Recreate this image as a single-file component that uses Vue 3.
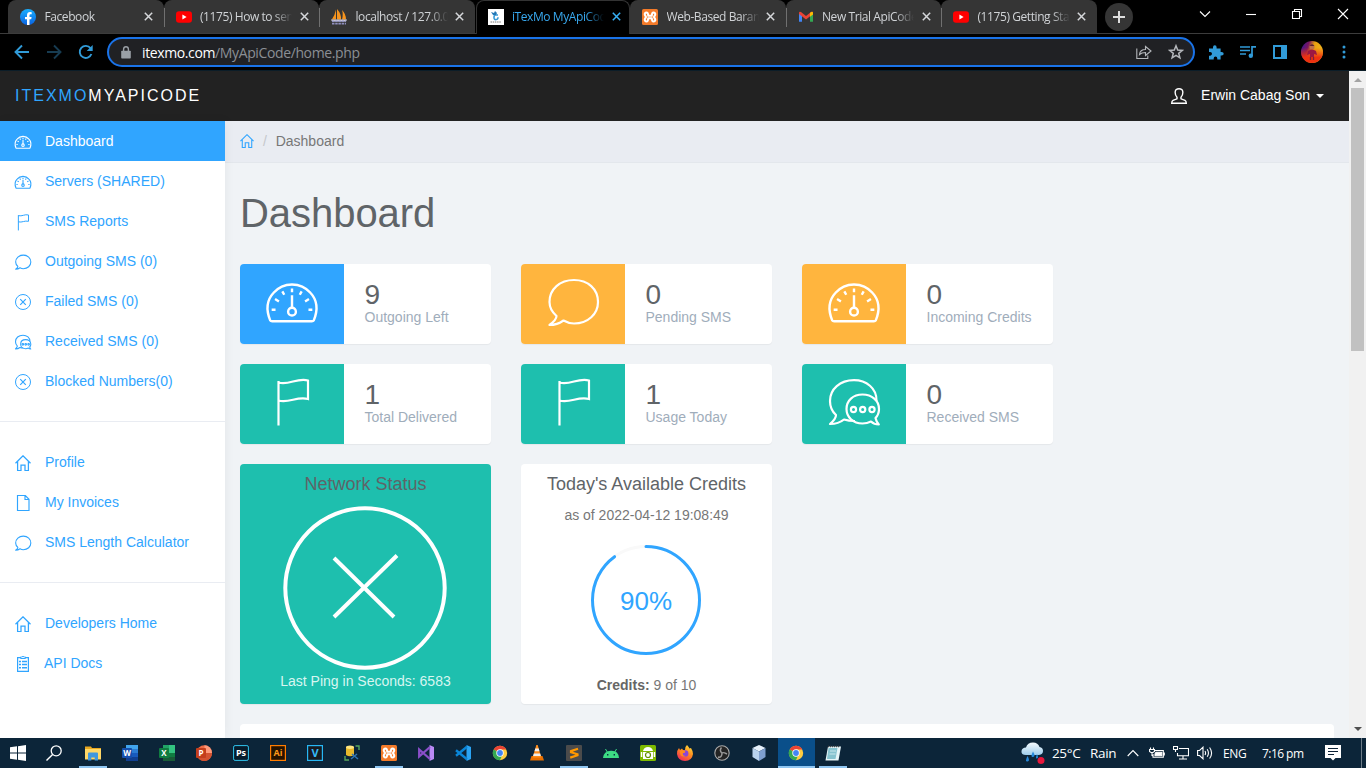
<script setup>
const tabs = [
  { icon: 'facebook', title: 'Facebook' },
  { icon: 'youtube', title: '(1175) How to send', sep: true },
  { icon: 'pma', title: 'localhost / 127.0.0.1', sep: true },
  { icon: 'itexmo', title: 'iTexMo MyApiCode', active: true },
  { icon: 'xampp', title: 'Web-Based Barangay' },
  { icon: 'gmail', title: 'New Trial ApiCode', sep: true },
  { icon: 'youtube', title: '(1175) Getting Started', sep: true },
]
const menu = [
  [
    { icon: 'dash', label: 'Dashboard', active: true },
    { icon: 'dash', label: 'Servers (SHARED)' },
    { icon: 'flag', label: 'SMS Reports' },
    { icon: 'bubble', label: 'Outgoing SMS (0)' },
    { icon: 'cancel', label: 'Failed SMS (0)' },
    { icon: 'bubbles', label: 'Received SMS (0)' },
    { icon: 'cancel', label: 'Blocked Numbers(0)' },
  ],
  [
    { icon: 'home', label: 'Profile' },
    { icon: 'file', label: 'My Invoices' },
    { icon: 'bubble', label: 'SMS Length Calculator' },
  ],
  [
    { icon: 'home', label: 'Developers Home' },
    { icon: 'clip', label: 'API Docs', tight: true },
  ],
]
const cards = [
  { icon: 'dash', color: 'blue', value: 9, label: 'Outgoing Left' },
  { icon: 'bubble', color: 'orange', value: 0, label: 'Pending SMS' },
  { icon: 'dash', color: 'orange', value: 0, label: 'Incoming Credits' },
  { icon: 'flag', color: 'teal', value: 1, label: 'Total Delivered' },
  { icon: 'flag', color: 'teal', value: 1, label: 'Usage Today' },
  { icon: 'bubbles', color: 'teal', value: 0, label: 'Received SMS' },
]
const apps = [
  { icon: 'explorer', open: true },
  { icon: 'word', glyph: 'W', kind: 'office' },
  { icon: 'excel', glyph: 'X', kind: 'office' },
  { icon: 'ppt', glyph: 'P', kind: 'office' },
  { icon: 'ps', glyph: 'Ps', kind: 'frame' },
  { icon: 'ai', glyph: 'Ai', kind: 'amber' },
  { icon: 'vegas', glyph: 'V', kind: 'cyan' },
  { icon: 'dbtool' }, { icon: 'xampp', open: true }, { icon: 'vs' }, { icon: 'vscode' }, { icon: 'chrome' },
  { icon: 'vlc' }, { icon: 'sublime', open: true }, { icon: 'android' }, { icon: 'emulator' }, { icon: 'firefox' },
  { icon: 'obs' }, { icon: 'vbox' }, { icon: 'chrome', active: true }, { icon: 'notepad', open: true },
]
</script>

<template>
  <div class="screen">
    <svg class="defs" width="0" height="0">
      <defs>
        <linearGradient id="gFb" x1="0" y1="0" x2="0" y2="1"><stop offset="0" stop-color="#19afff" /><stop offset="1" stop-color="#0a62e0" /></linearGradient>
        <linearGradient id="gCloud" x1="0" y1="0" x2="0" y2="1"><stop offset="0" stop-color="#f4fafe" /><stop offset="1" stop-color="#9fcdec" /></linearGradient>
        <linearGradient id="gFox" x1="0.8" y1="0" x2="0.2" y2="1"><stop offset="0" stop-color="#ffdf3a" /><stop offset="0.45" stop-color="#ff8a1e" /><stop offset="1" stop-color="#f0245e" /></linearGradient>
        <linearGradient id="gAv" x1="0" y1="0" x2="1" y2="0.3"><stop offset="0" stop-color="#2b1aa0" /><stop offset="0.35" stop-color="#7a1560" /><stop offset="0.6" stop-color="#e8a010" /><stop offset="1" stop-color="#f2b61c" /></linearGradient>
        <linearGradient id="gAvLow" x1="0" y1="0" x2="0" y2="1"><stop offset="0.3" stop-color="#f03a10" stop-opacity="0" /><stop offset="0.75" stop-color="#ee3010" /></linearGradient>
      </defs>

      <symbol id="dash" viewBox="0 0 64 64">
        <g class="line" fill="none" stroke="currentColor">
          <path d="M9.500 51C5 40 6 30 13 22.500C23 11 41 11 51 22.500C58 30 59 40 54.500 51Q54 51.800 52.500 51.800H11.500Q10 51.800 9.500 51Z" />
          <circle cx="32" cy="42" r="4" />
          <path d="M32 38V25M32 18v4M22 21l2 3.500M42 21l-2 3.500M14.500 29l4 2.500M49.500 29l-4 2.500M11 40h4M53 40h-4" />
        </g>
      </symbol>
      <symbol id="bubble" viewBox="0 0 64 64">
        <path class="line" fill="none" stroke="currentColor" stroke-linejoin="round" d="M33 10C19 10 8.500 19 8.500 32C8.500 37.500 11 42 15.500 46C15.500 49 12.500 52 8.500 55C14.500 55 19 53 22.500 50.500C26 52.500 30 53.500 33 53.500C47 53.500 57 44 57 32C57 19 47 10 33 10Z" />
      </symbol>
      <symbol id="bubbles" viewBox="0 0 64 64">
        <g class="line" fill="none" stroke="currentColor" stroke-linejoin="round">
          <path d="M54.500 31C55 18 44 10.200 32 10.200C18 10.200 8 19 8 31C8 36 9.500 41 14 45C14 48 11.500 51 8 54C14 54 19 52 22 49.500C25 50.500 28 51 33 51" />
          <path d="M40.500 24.500C31 24.500 24.500 30.500 24.500 39C24.500 47 31 53.500 40.500 53.500C44 53.500 46.500 52.800 49 51.500C51 53.500 53.500 54.500 56.800 54.500C55 52.500 54 50.500 53.500 48C56 45.500 57 42.500 57 39C57 30.500 50 24.500 40.500 24.500Z" />
          <circle cx="31.500" cy="39.500" r="2.600" /><circle cx="40.700" cy="39.500" r="2.600" /><circle cx="50" cy="39.500" r="2.600" />
        </g>
      </symbol>
      <symbol id="flag" viewBox="0 0 64 64">
        <path class="line" fill="none" stroke="currentColor" d="M18.500 56.500V12M18.500 13.500C29 16.500 37 8.500 48 11.500V30C37 27 29 34.500 18.500 31.500" />
      </symbol>
      <symbol id="cancel" viewBox="0 0 16 16">
        <g fill="none" stroke="currentColor"><circle cx="8" cy="8" r="7.500" /><path stroke-width="1.200" d="M5.200 5.200l5.600 5.600M10.800 5.200l-5.600 5.600" /></g>
      </symbol>
      <symbol id="home" viewBox="0 0 16 16">
        <path fill="none" stroke="currentColor" stroke-width="1.250" d="M.5 8.200L8 .8l7.500 7.400M2.600 6.500v9H6V10h4v5.500h3.400v-9" />
      </symbol>
      <symbol id="file" viewBox="0 0 16 16">
        <path fill="none" stroke="currentColor" stroke-width="1.150" d="M2.500.5h7.800l3.700 3.800v11.200H2.500zM10 .5v4h4" />
      </symbol>
      <symbol id="clip" viewBox="0 0 16 16">
        <g fill="none" stroke="currentColor"><path stroke-width="1.200" d="M5 1.600H2.600v13.800h10.800V1.600H11" /><path d="M5.500 2.500h5V1H9.300Q8-.2 6.700 1H5.500z" /><path stroke-width="1.400" d="M4 5.500h2M4 8.500h2M4 11.800h2M7 5.500h5M7 8.500h5M7 11.800h5" /></g>
      </symbol>
      <symbol id="user" viewBox="0 0 16 16">
        <path fill="none" stroke="currentColor" stroke-width="1.400" d="M6 9.300C4.600 8 4 6.300 4.200 3.700C4.400 1.800 5.800.7 8 .7s3.600 1.100 3.800 3C12 6.300 11.400 8 10 9.300v1.500l4 1.500q1.200.5 1.300 3H.7Q.8 12.800 2 12.300l4-1.500z" />
      </symbol>

      <symbol id="facebook" viewBox="0 0 16 16">
        <circle cx="8" cy="8" r="8" fill="url(#gFb)" /><path fill="#fff" d="M7 16v-5.700H5V8h2V6.300C7 4.200 8.200 3.100 10 3.100l1.700.1v2h-1c-.9 0-1.200.5-1.200 1.100V8h2.100l-.4 2.300H9.500V16z" />
      </symbol>
      <symbol id="youtube" viewBox="0 0 16 16"><rect y="2.300" width="16" height="11.500" rx="3" fill="#f00" /><path fill="#fff" d="M6.400 5.600l4.200 2.400-4.200 2.400z" /></symbol>
      <symbol id="pma" viewBox="0 0 16 16">
        <path fill="#f7941d" d="M5 .5v10H.8Q4 6 5 .5M6 0q4.500 5 4 10.500H6M11 1q4 4 4 9.500H11Q12.500 5 11 1" /><path fill="#d5d5e2" d="M0 10.500h16l-1 2H1z" /><path fill="none" stroke="#8f8fbd" stroke-width="1.600" stroke-dasharray="2.500 .7" d="M1 12.300h14M1 14.600h14" />
      </symbol>
      <symbol id="itexmo" viewBox="0 0 16 16"><path fill="#fff" d="M0 0h16v16H0z" /><path fill="none" stroke="#3b9bd5" stroke-width="1.600" d="M10 6H7.500Q6 6 6 8.500T8 10.500Q10 10.700 10 8.300" /><path fill="#2479b8" d="M3 3l3 1 1-2 2 2-1 2H5z" /><path stroke="#777" stroke-dasharray="1.500 .7" d="M2.500 13h11" /></symbol>
      <symbol id="xampp" viewBox="0 0 16 16"><rect width="16" height="16" rx="1.500" fill="#f47b2a" /><path fill="none" stroke="#fff" stroke-width="2.100" stroke-linejoin="round" d="M4.600 3.500Q2.500 3.700 2.800 5.800L4 8 2.800 10.300Q2.600 12.500 4.600 12.500 6 12.500 6.300 9.200H9.700Q10 12.500 11.400 12.500 13.500 12.500 13.200 10.300L12 8l1.200-2.200Q13.500 3.600 11.400 3.500 10 3.500 9.700 6.800H6.300Q6 3.500 4.600 3.500Z" /></symbol>
      <symbol id="gmail" viewBox="0 0 16 16"><path fill="#4285f4" d="M1 4v8.800h3V6z" /><path fill="#34a853" d="M12 6v6.800h3V4z" /><path fill="#ea4335" d="M1 5V4Q1 2 3 3l5 4 5-4q2-1 2 1v1l-7 5.500z" /><path fill="#fbbc04" d="M12 4l1-1q2-.8 2 1v1.500l-3 2.200z" /></symbol>

      <symbol id="explorer" viewBox="0 0 16 16"><path fill="#e9a820" d="M0 1.500h6l1 1.500h9v4H0z" /><path fill="#ffd766" d="M0 4h16v10.500H0z" /><path fill="#3f97de" d="M3 8.500q0-1 1-1h8q1 0 1 1v7h-3.300v-3H6.300v3H3z" /></symbol>
      <symbol id="word" viewBox="0 0 16 16"><path fill="#41a5ee" d="M4 0h12v4.500H4z" /><path fill="#2b7cd3" d="M4 4h12v4H4z" /><path fill="#185abd" d="M4 8h12v4H4z" /><path fill="#103f91" d="M4 12h12v4H4z" /><rect y="3" width="10" height="10" rx="1" fill="#1650ad" /></symbol>
      <symbol id="excel" viewBox="0 0 16 16"><path fill="#21a366" d="M4 0h6v8H4z" /><path fill="#33c481" d="M10 0h6v8h-6z" /><path fill="#185c37" d="M4 8h12v8H4z" /><path fill="#107c41" d="M10 8h6v4h-6z" /><rect y="3" width="10" height="10" rx="1" fill="#107c41" /></symbol>
      <symbol id="ppt" viewBox="0 0 16 16"><circle cx="8.300" cy="8" r="7.700" fill="#ed6c47" /><path fill="#ff9a7a" d="M8.500.3A7.700 7.700 0 0 1 16 8H8.500z" /><path fill="#d35230" d="M.6 8H16A7.700 7.700 0 0 1 .6 9z" /><rect y="3" width="10" height="10" rx="1" fill="#c43e1c" /></symbol>
      <symbol id="ps" viewBox="0 0 16 16"><rect x=".6" y=".6" width="14.800" height="14.800" rx="1.500" fill="#071c2c" stroke="#31c5f0" /></symbol>
      <symbol id="ai" viewBox="0 0 16 16"><rect x=".6" y=".6" width="14.800" height="14.800" fill="#261300" stroke="#ff7c00" stroke-width="1.200" /></symbol>
      <symbol id="vegas" viewBox="0 0 16 16"><rect x=".6" y=".6" width="14.800" height="14.800" fill="#171a20" stroke="#27b7f5" stroke-width="1.200" /></symbol>
      <symbol id="dbtool" viewBox="0 0 16 16"><path fill="#e8b92c" d="M2 2v8q4 2.500 8 0V2z" /><ellipse cx="6" cy="2.200" rx="4" ry="1.700" fill="#ffe680" /><path fill="none" stroke="#58a55c" stroke-width="1.400" d="M11.500 1H15v4M1 11v4h4" /><path fill="none" stroke="#2f74b5" stroke-width="1.500" d="M7 14l6-5M8 9l6 5" /></symbol>
      <symbol id="vs" viewBox="0 0 16 16"><path fill="#b98af5" d="M11.500 0L16 2v12l-4.500 2z" /><path fill="none" stroke="#8a4fc9" stroke-width="2.300" d="M12 2L1.200 11.500V4.500L12 14" /></symbol>
      <symbol id="vscode" viewBox="0 0 16 16"><path fill="#2aa4f4" d="M11.500 0L16 2v12l-4.500 2z" /><path fill="none" stroke="#0a86d8" stroke-width="2.400" d="M12 1.800L1 10.700M12 14.200L1 5.300" /></symbol>
      <symbol id="chrome" viewBox="0 0 16 16"><circle cx="8" cy="8" r="7.200" fill="#ffcd40" /><path fill="#ea4335" d="M8 8L1.700 4.400A7.200 7.200 0 0 1 14.300 4.400H8z" /><path fill="#34a853" d="M1.700 4.400L8 8l1.600 3.400L8 15.200A7.200 7.200 0 0 1 1.700 4.400" /><circle cx="8" cy="8" r="3.700" fill="#fff" /><circle cx="8" cy="8" r="2.900" fill="#4285f4" /></symbol>
      <symbol id="vlc" viewBox="0 0 16 16"><path fill="#e86f00" d="M2.500 11h11l1.500 4.500H1z" /><path fill="#ff8c1a" d="M7.300 0h1.400l3.600 12.500H3.700z" /><path fill="#eee" d="M6.300 3.500h3.400l.8 2.800H5.500zM4.800 8.500h6.400l.7 2.500H4.100z" /></symbol>
      <symbol id="sublime" viewBox="0 0 16 16"><rect width="16" height="16" rx="1" fill="#4b4b4b" /><path fill="none" stroke="#ff9800" stroke-width="2.200" d="M12 3.800L5 6.100v1.200l6.500 1.900v1L4.200 12.600" /></symbol>
      <symbol id="android" viewBox="0 0 16 16"><path fill="#3ddc84" d="M0 13Q.5 6 8 5.700t8 7.300z" /><path stroke="#3ddc84" d="M2.500 4l2 3.500M13.500 4l-2 3.500" /><path fill="#073042" d="M4 9h1.400v1.400H4zM10.600 9H12v1.400h-1.400z" /></symbol>
      <symbol id="emulator" viewBox="0 0 16 16"><rect width="16" height="16" rx="1.500" fill="#7eb900" /><path fill="#fff" d="M3 6q1-4 5-4t5 4zM3 7h10v7H3zM.8 7h1.500v5H.8zM13.700 7h1.500v5h-1.500z" /><circle cx="8" cy="10" r="2.500" fill="none" stroke="#638f00" stroke-width="1.200" /></symbol>
      <symbol id="firefox" viewBox="0 0 16 16"><path fill="url(#gFox)" d="M10 0q2 2 2.500 3.500L14 3q2 3 2 6-1 7-8 7T0 9q0-4 2-6l1 2 2-1.500L6 5l2 0Q7.500 2 10 0" /><circle cx="8.200" cy="8.500" r="3.200" fill="#8a45d8" /><path fill="#ff8a1e" d="M3 6q2-2 5 0 1 2-2 2-1 3 3 3-5 2-6-3z" /></symbol>
      <symbol id="obs" viewBox="0 0 16 16"><circle cx="8" cy="8" r="7.200" fill="#242424" stroke="#aaa" stroke-width="1.100" /><g fill="none" stroke="#999" stroke-width="1.500"><path d="M7.500 2.500q-2.500 3 .5 5.500M13 9q-4-2-5-1M4 12q4 1 4-4" /></g></symbol>
      <symbol id="vbox" viewBox="0 0 16 16"><path fill="#e8f2fc" d="M8 0l6.500 3L8 6.500 1.500 3z" /><path fill="#b9d2ee" d="M1.500 3L8 6.500V16l-6.500-4z" /><path fill="#7f9fce" d="M14.500 3L8 6.500V16l6.500-4z" /></symbol>
      <symbol id="notepad" viewBox="0 0 16 16"><path fill="#e6f5f8" d="M3 1.500h13l-2.500 14H.5z" /><path fill="#86c3cf" d="M3.500 3h9L10.500 14H2z" /><path stroke="#c8e6ec" d="M5 6h6M4.500 9h6" /><path stroke="#444" stroke-width="1.500" stroke-dasharray="1 1" d="M3 1.500h12" /></symbol>
    </svg>

    <header class="tabstrip">
      <div v-for="(t, i) in tabs" :key="i" class="tab" :class="{ active: t.active, sep: t.sep }">
        <svg class="ico16"><use :href="'#' + t.icon" /></svg>
        <span class="tab-title">{{ t.title }}</span>
        <svg class="x" viewBox="0 0 9 9"><path d="M.8.8l7.400 7.400M8.200.8L.8 8.200" /></svg>
      </div>
      <div class="newtab"><svg width="12" height="12" viewBox="0 0 12 12"><path d="M6 0v12M0 6h12" stroke="#ddd" stroke-width="2" /></svg></div>
      <div class="winctl">
        <svg viewBox="0 0 12 12"><path d="M1 3.500l5 5 5-5" /></svg>
        <svg viewBox="0 0 12 12"><path d="M1 6.500h10" /></svg>
        <svg viewBox="0 0 12 12"><path d="M1.500 3.500h7v7h-7zM3.500 3.500v-2h7v7h-2" /></svg>
        <svg viewBox="0 0 12 12"><path d="M1 1l10 10M11 1L1 11" /></svg>
      </div>
    </header>

    <div class="toolbar">
      <svg class="nav" viewBox="0 0 16 16"><path d="M15 8H2M8 1.500L1.500 8 8 14.500" /></svg>
      <svg class="nav dim" viewBox="0 0 16 16"><path d="M1 8h13M8 1.500L14.500 8 8 14.500" /></svg>
      <svg class="nav" viewBox="0 0 16 16"><path d="M13.400 10A6 6 0 1 1 12.500 4.200" /><path class="solid" d="M14.700 1v6H8.700z" /></svg>
      <div class="omni">
        <svg width="10" height="13" viewBox="0 0 10 13"><path fill="#9aa0a6" d="M1 4.800h8q.8 0 .8.800v6q0 1-.8 1H1q-.8 0-.8-1v-6q0-.8.8-.8z" /><path d="M2.600 5V3.100Q2.700.8 5 .8t2.400 2.300V5" fill="none" stroke="#9aa0a6" stroke-width="1.400" /></svg>
        <span class="url"><b>itexmo.com</b>/MyApiCode/home.php</span>
        <svg class="oi share" viewBox="0 0 16 16"><path d="M.8 4.500v10h11v-3M3.500 10.500Q4 5.500 9.500 5.500v-3L15 7l-5.500 4.500V8.500Q5.500 8.500 3.500 10.500z" /></svg>
        <svg class="oi" viewBox="0 0 16 16"><path stroke-width="1.500" d="M8 1.800l1.700 4.300 4.600.3-3.600 2.900 1.200 4.500L8 11.300l-3.900 2.500 1.200-4.500L1.700 6.400l4.600-.3z" /></svg>
      </div>
      <div class="ext">
        <svg viewBox="0 0 16 16"><path fill="#319bd8" d="M1 4.500h4V3.300Q5 1.200 6.800 1.200t1.800 2.100v1.200h4V8h1Q15.700 8 15.700 9.800t-2.100 1.800h-1v4H9.300v-1Q9.300 12.500 7.500 12.500t-1.800 2.100v1H1v-3.800h1.200Q4 11.500 4 9.800T2.200 8H1z" /></svg>
        <svg viewBox="0 0 16 16"><path fill="none" stroke="#319bd8" stroke-width="1.700" d="M0 3h10M0 6.500h10M0 10h6M12 12V2.800h4" /><circle cx="10.800" cy="11.800" r="2.200" fill="#319bd8" /></svg>
        <svg viewBox="0 0 16 16"><path fill="#319bd8" d="M1 1h14v14H1zM3 3v10h6V3z" fill-rule="evenodd" /></svg>
        <svg class="avatar" viewBox="0 0 22 22"><circle cx="11" cy="11" r="11" fill="url(#gAv)" /><circle cx="11" cy="11" r="11" fill="url(#gAvLow)" /><circle cx="11" cy="6" r="2.500" fill="#c0714a" /><path d="M8.500 5q2.500-3.500 5 0z" fill="#5a2030" /><path fill="#9c1743" d="M7 10q4-3 8 0l1 4-3-1v3H9v-3l-3 1z" /><path stroke="#7a2038" stroke-width="1.300" d="M9.500 16v3M12.500 16v3" /></svg>
        <svg viewBox="0 0 16 16"><g fill="#319bd8"><circle cx="8" cy="3" r="1.500" /><circle cx="8" cy="8" r="1.500" /><circle cx="8" cy="13" r="1.500" /></g></svg>
      </div>
    </div>

    <div class="viewport">
      <div class="page">
        <div class="navbar">
          <div class="brand"><span>iTexMo</span>MyApiCode</div>
          <div class="account"><svg class="ico16"><use href="#user" /></svg><span class="name">Erwin Cabag Son</span><i class="caret"></i></div>
        </div>
        <div class="body">
          <aside>
            <ul v-for="(g, i) in menu" :key="i">
              <li v-for="m in g" :key="m.label" :class="{ active: m.active, tight: m.tight }">
                <svg :class="['mi', 'mi-' + m.icon]"><use :href="'#' + m.icon" /></svg><span>{{ m.label }}</span>
              </li>
            </ul>
          </aside>
          <main>
            <div class="crumbs"><svg><use href="#home" /></svg><span class="slash">/</span><span>Dashboard</span></div>
            <div class="content">
              <h1>Dashboard</h1>
              <div class="grid">
                <div v-for="c in cards" :key="c.label" class="card">
                  <div class="pic" :class="c.color"><svg :class="'big-' + c.icon"><use :href="'#' + c.icon" /></svg></div>
                  <div class="stat"><div class="num">{{ c.value }}</div><div class="lbl">{{ c.label }}</div></div>
                </div>
                <div class="card tall net">
                  <h4>Network Status</h4>
                  <svg width="166" height="166" viewBox="0 0 166 166"><g fill="none" stroke="#fff" stroke-width="4"><circle cx="83" cy="83" r="79.700" /><path d="M52 53l60 59M115 50.500L52 112" /></g></svg>
                  <p>Last Ping in Seconds: 6583</p>
                </div>
                <div class="card tall credits">
                  <h4>Today's Available Credits</h4>
                  <p>as of 2022-04-12 19:08:49</p>
                  <div class="pie">
                    <svg width="110" height="110" viewBox="0 0 110 110"><g fill="none" stroke-width="3"><circle cx="55" cy="55" r="53.500" stroke="#f9f9f9" /><circle cx="55" cy="55" r="53.500" stroke="#30a5ff" stroke-linecap="round" pathLength="100" stroke-dasharray="90 100" transform="rotate(-90 55 55)" /></g></svg>
                    <span>90%</span>
                  </div>
                  <p class="of"><b>Credits:</b> 9 of 10</p>
                </div>
              </div>
              <div class="panel"></div>
            </div>
          </main>
        </div>
      </div>
      <div class="scroll"><i class="up"></i><div class="thumb"></div><i class="down"></i></div>
    </div>

    <footer class="taskbar">
      <div class="cell start"><svg class="ico16" viewBox="0 0 16 16"><path fill="#fff" d="M0 2.300L7 1.300V7.500H0zM8 1.200L16 0v7.500H8zM0 8.500h7v6.200l-7-1zM8 8.500h8V16l-8-1.200z" /></svg></div>
      <div class="cell find"><svg class="ico16" viewBox="0 0 16 16"><circle cx="10.200" cy="5.800" r="5" fill="none" stroke="#fff" stroke-width="1.300" /><path d="M6.600 9.400L.5 15.500" stroke="#fff" stroke-width="1.400" /></svg></div>
      <div v-for="(a, i) in apps" :key="i" class="app" :class="{ open: a.open, active: a.active }">
        <svg class="ico16"><use :href="'#' + a.icon" /></svg>
        <span v-if="a.glyph" class="glyph" :class="a.kind">{{ a.glyph }}</span>
      </div>
      <div class="tray">
        <svg class="weather" viewBox="0 0 24 22"><path fill="url(#gCloud)" d="M5 13Q0 13 .5 9 1 5.500 5 5.500 6.500.5 12 .5q5 0 6.500 4.500 3.500.5 3.500 4t-4 4z" /><path fill="#2689dd" d="M6.500 14q3 5 0 5.500T6.500 14M12 9.500q3 5 0 5.500t0-5.500M16 12q2 4 0 4.500t0-4.500" /><circle cx="20" cy="18.500" r="3.500" fill="#e8173c" /></svg>
        <span class="temp">25°C</span><span class="rain">Rain</span>
        <svg class="chev" viewBox="0 0 12 8"><path d="M.7 7L6 1.500 11.300 7" /></svg>
        <svg class="bat" viewBox="0 0 16 14"><path d="M5.500 4.500h8.800v6.800H4V8M15.300 6.500v3" /><path fill="#fff" d="M7 6.300h5.800v3.400H6V8z" /><path d="M1.500 1.500v2M4.500 1.500v2M.5 3.500h5v2l-1.500 1H2l-1.500-1zM3 6.500v3h1" /></svg>
        <svg class="netw" viewBox="0 0 16 14"><path d="M6 2.500h9.500v7.200H4.500V7M10 9.700v3M6 13h8M.5.500h4v3h-4zM2.500 3.500V6" /></svg>
        <svg class="snd" viewBox="0 0 16 14"><path d="M.6 4.500h2L6 1.200v11.600L2.600 9.500h-2zM8 5q1.200 2 0 4M10.200 3.200q2.500 3.800 0 7.600M12.600 1.500q4 5.500 0 11" /></svg>
        <span class="eng">ENG</span><span class="time">7:16 pm</span>
        <svg class="note" viewBox="0 0 16 16"><path fill="#fff" d="M0 0h16v13H10.500L8 15.500 5.500 13H0z" /><path d="M3 3.500h10M3 6.500h10M3 9.500h6" stroke="#0c2236" stroke-width="1.200" /></svg>
        <i class="peek"></i>
      </div>
    </footer>
  </div>
</template>

<style>
html, body { margin: 0; overflow: hidden; }
</style>
<style scoped>
* { box-sizing: border-box; }
.screen { width: 1366px; height: 768px; overflow: hidden; display: flex; flex-direction: column; background: #000; font-family: "Liberation Sans", Arial, sans-serif; font-size: 14px; color: #5f6468; }
.defs { position: absolute; }
svg { display: block; flex: none; }
.line { stroke-width: var(--line, 2.2); }
.ico16 { width: 16px; height: 16px; }

.tabstrip { height: 34px; display: flex; padding-left: 8px; border-bottom: 1px solid #3c3c3c; flex: none; }
.tab { width: 155.5px; height: 33px; background: #353535; border-radius: 8px 8px 0 0; display: flex; align-items: center; padding-left: 12px; position: relative; font: 12px "Open Sans", "Noto Sans", sans-serif; color: #d0d3d6; }
.tab.sep::before { content: ""; position: absolute; left: 0; top: 8px; width: 1px; height: 19px; background: #707070; }
.tab.active { width: 154.5px; margin-left: 1px; height: 34px; padding-bottom: 2px; background: #000; color: #38a8ee; border: 1px solid #333; border-bottom: 0; padding-left: 11px; }
.tab-title { width: 92px; margin-left: 8.5px; overflow: hidden; white-space: nowrap; letter-spacing: -.42px; -webkit-mask-image: linear-gradient(90deg, #000 80%, transparent 100%); mask-image: linear-gradient(90deg, #000 80%, transparent 100%); }
.x { width: 9px; height: 9px; margin-left: 7.5px; stroke: #d5d7da; stroke-width: 1.5; }
.tab.active .x { stroke: #38b0f5; }
.newtab { width: 28px; height: 28px; margin: 3px 0 0 8.5px; border-radius: 50%; background: #353535; display: grid; place-items: center; }
.winctl { margin-left: auto; display: flex; gap: 34px; padding: 8px 17px 0 0; }
.winctl svg { width: 12px; height: 12px; fill: none; stroke: #fff; stroke-width: 1.1; }

.toolbar { height: 37px; flex: none; display: flex; align-items: center; padding: 0 14px; border-bottom: 1px solid #0b1d28; }
.nav { width: 16px; height: 16px; margin-right: 16px; fill: none; stroke: #319bd8; stroke-width: 1.9; }
.nav.dim { stroke: #173c52; }
.nav .solid { fill: #319bd8; stroke: none; }
.omni { width: 1088px; height: 30px; margin-left: -3px; border: 2px solid #1a73e8; border-radius: 15px; background: #202124; display: flex; align-items: center; padding: 0 9px 0 12px; }
.url { margin-left: 11px; flex: 1; font: 14px "Open Sans", "Noto Sans", sans-serif; letter-spacing: -.38px; color: #8b8f94; }
.url b { color: #fff; font-weight: 400; }
.oi { width: 16px; height: 16px; margin-left: 16px; fill: none; stroke: #b4b7bb; stroke-width: 1.1; }
.ext { display: flex; align-items: center; gap: 16px; margin-left: 13px; }
.ext svg { width: 16px; height: 16px; }
.ext .avatar { width: 22px; height: 22px; margin: 0 -3px; }

.viewport { height: 667px; flex: none; display: flex; overflow: hidden; }
.page { width: 1349px; }
.navbar { height: 50px; background: #222; display: flex; justify-content: space-between; align-items: center; padding: 0 25px 0 15px; }
.brand { font-size: 16px; letter-spacing: 2px; text-transform: uppercase; color: #fff; }
.brand span { color: #30a5ff; }
.account { display: flex; align-items: center; color: #fff; }
.name { margin: -2px 0 0 14px; }
.caret { margin-left: 6px; border: 4px solid transparent; border-top-color: #fff; border-bottom: 0; }
.body { display: flex; height: 617px; }
aside { width: 225px; background: #fff; box-shadow: 1px 0 10px rgba(0, 0, 0, .05); position: relative; flex: none; }
ul { list-style: none; margin: 0; padding: 0 0 20px; }
ul + ul { border-top: 1px solid #e9ecf2; padding-top: 20px; }
li { height: 40px; display: flex; align-items: center; padding-left: 15px; color: #30a5ff; }
li.active { background: #30a5ff; color: #fff; }
li span { margin-left: 14px; }
li.tight span { margin-left: 13px; }
.mi { width: 16px; height: 16px; margin-top: 2px; }
.mi-dash, .mi-bubble, .mi-bubbles, .mi-flag { --line: 3.5; width: 20px; height: 20px; margin: 2px -2px 0; }
.mi-flag { --line: 2.9; width: 22px; height: 22px; margin: 2px -3px 0; }
main { flex: 1; background: #f0f3f6; }
.crumbs { height: 42px; background: #e9ecf2; border-bottom: 1px solid #e3e7ec; display: flex; align-items: center; padding: 0 0 1px 15px; color: #777; }
.crumbs svg { width: 14px; height: 14px; color: #30a5ff; }
.slash { color: #c5c8cc; margin: 0 8.9px; }
.content { padding: 0 15px; }
h1 { font-size: 40px; line-height: 44px; font-weight: 400; margin: 28px 0 29px; letter-spacing: -.05px; }
.grid { display: grid; grid-template-columns: repeat(3, 251px); grid-template-rows: 80px 80px 240px; gap: 20px 30px; }
.card { display: flex; background: #fff; border-radius: 4px; overflow: hidden; box-shadow: 0 1px 1px rgba(0, 0, 0, .05); }
.pic { width: 104px; display: grid; place-items: center; color: #fff; }
.pic svg { width: 64px; height: 64px; margin: -5px 0 0 -1px; }
.pic .big-dash { --line: 2.5; width: 62px; height: 62px; margin: -5px 0 0; }
.pic .big-flag { margin-top: -7px; }
.blue { background: #30a5ff; }
.orange { background: #ffb53e; }
.teal, .net { background: #1ebfae; }
.stat { padding: 17px 0 0 20.5px; }
.num { font-size: 28px; line-height: 28px; }
.lbl { line-height: 18px; margin-top: -1px; color: #9fadbb; }
.tall { flex-direction: column; align-items: center; padding-top: 10px; }
h4 { margin: 0; font-size: 18px; line-height: 20px; font-weight: 400; }
p { margin: 0; line-height: 20px; }
.net svg { margin: 11px 2px 0 0; }
.net p { color: #d8f6f1; }
.credits p { margin-top: 11px; color: #777; }
.pie { margin: 20px 1px 0 0; position: relative; }
.pie span { position: absolute; inset: 0; text-align: center; line-height: 112px; font-size: 26px; color: #30a5ff; }
.credits .of { margin-top: 20px; }
.of b { color: #666; }
.panel { height: 40px; margin-top: 20px; background: #fff; border-radius: 4px; }
.scroll { width: 17px; background: #f1f1f1; display: flex; flex-direction: column; align-items: center; }
.up { margin-top: 7px; border: 4px solid transparent; border-bottom-color: #a3a3a3; border-top: 0; }
.thumb { width: 13px; height: 263px; margin-top: 6px; background: #c1c1c1; }
.down { margin: auto 0 7px; border: 4px solid transparent; border-top-color: #505050; border-bottom: 0; }

.taskbar { height: 30px; flex: none; background: #0c2539; display: flex; }
.cell, .app { height: 30px; width: 37px; display: grid; place-items: center; flex: none; position: relative; }
.start { width: 36px; }
.find { width: 36px; margin-right: 2.5px; }
.app.active { background: #0a4f8a; }
.app.open::after, .app.active::after { content: ""; position: absolute; bottom: 0; left: 4px; width: 28px; height: 2px; background: #8fc6f2; }
.app.active::after { left: 0; width: 37px; }
.glyph { position: absolute; left: 10px; top: 10px; width: 17px; text-align: center; font: bold 9px/10px "Open Sans", "Noto Sans", sans-serif; color: #fff; }
.glyph.office { width: 11px; font-size: 8px; }
.glyph.amber { color: #ff9a1a; }
.glyph.cyan { color: #35b9f7; font-size: 11px; }
.tray { margin-left: auto; display: flex; align-items: center; color: #fff; font: 12px "Open Sans", "Noto Sans", sans-serif; }
.tray svg { fill: none; stroke: #fff; stroke-width: 1.1; }
.tray .weather { width: 24px; height: 22px; stroke: none; }
.temp, .rain { font-size: 13.5px; letter-spacing: -.35px; white-space: nowrap; }
.temp { width: 30px; margin-left: 7px; }
.rain { width: 28px; margin-left: 8px; }
.chev { width: 12px; height: 8px; margin-left: 9px; }
.bat { width: 16px; height: 14px; margin-left: 10px; }
.netw { width: 16px; height: 14px; margin-left: 8px; }
.snd { width: 16px; height: 14px; margin-left: 8px; }
.eng { width: 24px; margin-left: 10px; letter-spacing: -.4px; }
.time { width: 44px; margin-left: 15px; letter-spacing: -.55px; white-space: nowrap; }
.tray .note { width: 16px; height: 16px; margin-left: 19px; stroke: none; }
.peek { width: 1px; height: 30px; background: #6d7c88; margin: 0 4px 0 20px; }
</style>
